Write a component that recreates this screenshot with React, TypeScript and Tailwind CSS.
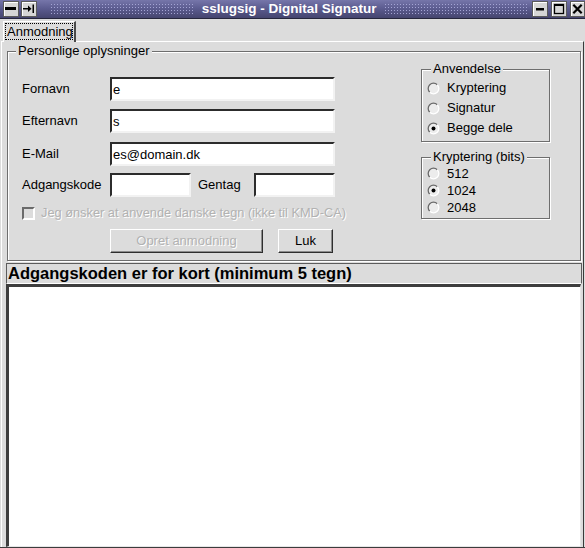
import React from "react";

// Raised / sunken bevels shared by the Motif-ish widgets below.
const sunken =
  "border-2 border-t-[#2c2c2c] border-l-[#2c2c2c] border-b-[#f2f2f2] border-r-[#f2f2f2]";
const raised =
  "border border-t-white border-l-white border-b-[#2e2e2e] border-r-[#2e2e2e] shadow-[inset_-1px_-1px_0_#8c8c8c]";
const etched =
  "border border-[#6e6e6e] shadow-[inset_1px_1px_0_#fff,1px_1px_0_#fff]";
const disabledText = "text-[#b2b2b2] [text-shadow:1px_1px_0_#fff]";

function TitleButton({ children, w = "w-[16px]" }: { children: React.ReactNode; w?: string }) {
  return (
    <div
      className={`${w} h-[16px] shrink-0 bg-[#d6d6d6] border border-[#5a5a5a] shadow-[inset_1px_1px_0_#fff] flex items-center justify-center`}
    >
      <svg width="14" height="14" viewBox="0 0 14 14">
        {children}
      </svg>
    </div>
  );
}

function Dots() {
  return (
    <div className="flex-1 h-[12px] bg-[radial-gradient(circle,#a4a4d4_0.7px,transparent_1px)] bg-[length:3px_3px]" />
  );
}

function TitleBar() {
  return (
    <div className="h-[19px] shrink-0 flex items-center bg-gradient-to-b from-[#7676aa] via-[#5a5a8e] to-[#45456f] border-b border-[#26263c]">
      <div className="ml-[3px] flex gap-[2px]">
        <TitleButton>
          <rect x="1" y="5" width="11" height="3" fill="#000" />
        </TitleButton>
        <TitleButton>
          <rect x="1" y="6" width="6" height="1.5" fill="#000" />
          <path d="M6 3.5 L9.5 6.75 L6 10 Z" fill="#000" />
          <rect x="10.5" y="2.5" width="1.5" height="8.5" fill="#000" />
        </TitleButton>
      </div>
      <div className="flex-1 flex items-center ml-[13px] mr-[4px]">
        <Dots />
        <span className="px-[8px] text-white font-bold text-[13.5px] leading-none">
          sslugsig - Dignital Signatur
        </span>
        <Dots />
      </div>
      <div className="flex gap-[3px]">
        <TitleButton>
          <rect x="3" y="6" width="8" height="2.5" fill="#000" />
        </TitleButton>
        <TitleButton>
          <rect x="2.5" y="2.5" width="9" height="9" fill="none" stroke="#000" strokeWidth="1.3" />
          <rect x="2" y="2" width="10" height="2" fill="#000" />
        </TitleButton>
        <TitleButton w="w-[15px]">
          <path d="M2.5 2.5 L11.5 11.5 M11.5 2.5 L2.5 11.5" stroke="#000" strokeWidth="2.4" />
        </TitleButton>
      </div>
    </div>
  );
}

function Radio({ on }: { on?: boolean }) {
  return (
    <svg width="13" height="13" viewBox="0 0 13 13" className="shrink-0">
      <circle cx="6.5" cy="6.5" r="5.3" fill="#ececec" />
      <path d="M2.75 10.25 A5.3 5.3 0 0 1 10.25 2.75" fill="none" stroke="#6a6a6a" strokeWidth="1.3" />
      <path d="M10.25 2.75 A5.3 5.3 0 0 1 2.75 10.25" fill="none" stroke="#ffffff" strokeWidth="1.3" />
      {on && <circle cx="6.5" cy="6.5" r="2" fill="#000" />}
    </svg>
  );
}

function RadioRow({ label, on, h }: { label: string; on?: boolean; h: string }) {
  return (
    <div className={`${h} flex items-center gap-[7px] pl-[5px]`}>
      <Radio on={on} />
      <span>{label}</span>
    </div>
  );
}

function Group({
  title,
  className,
  children,
  titleLeft = "left-[8px]",
}: {
  title: string;
  className: string;
  children: React.ReactNode;
  titleLeft?: string;
}) {
  return (
    <div className={`relative ${etched} ${className}`}>
      <span className={`absolute -top-[9px] ${titleLeft} px-[2px] bg-[#dcdcdc] leading-[15px]`}>
        {title}
      </span>
      {children}
    </div>
  );
}

function Field({ value, w }: { value?: string; w: string }) {
  return (
    <div className={`${w} h-[24px] bg-white ${sunken} flex items-center pl-[1px] leading-none`}>
      {value}
    </div>
  );
}

export default function App() {
  return (
    <div className="w-[585px] h-[548px] bg-[#dcdcdc] flex flex-col overflow-hidden font-['Liberation_Sans',Arial,sans-serif] text-[13px] text-black border-b border-[#3c3c3c]">
      <TitleBar />

      {/* tab strip */}
      <div className="h-[22px] shrink-0 flex items-end pl-[3px] relative z-10">
        <div className="w-[73px] h-[21px] -mb-[1px] bg-[#dcdcdc] border-t border-l border-white border-r-2 border-r-[#4a4a4a] p-[1px]">
          <div className="h-[17px] border border-dotted border-black flex items-center pl-[1px] leading-none">
            Anmodning
          </div>
        </div>
      </div>

      {/* tab page */}
      <div className="flex-1 flex flex-col mx-[1px] border-t border-l border-white border-r border-r-[#3a3a3a]">
        <Group title="Personlige oplysninger" className="ml-[5px] mt-[9px] w-[574px] h-[210px] shrink-0">
          <div className="flex">
            <div className="w-[413px] pl-[14px] pt-[25px]">
              <div className="flex items-center">
                <span className="w-[88px]">Fornavn</span>
                <Field value="e" w="w-[225px]" />
              </div>
              <div className="flex items-center mt-[8px]">
                <span className="w-[88px]">Efternavn</span>
                <Field value="s" w="w-[225px]" />
              </div>
              <div className="flex items-center mt-[9px]">
                <span className="w-[88px]">E-Mail</span>
                <Field value="es@domain.dk" w="w-[225px]" />
              </div>
              <div className="flex items-center mt-[7px]">
                <span className="w-[88px]">Adgangskode</span>
                <Field w="w-[81px]" />
                <span className="ml-[7px] w-[56px]">Gentag</span>
                <Field w="w-[81px]" />
              </div>
              <div className="flex items-center h-[14px] mt-[9px]">
                <div className="w-[13px] h-[13px] border-2 border-t-[#6a6a6a] border-l-[#6a6a6a] border-b-white border-r-white bg-[#dcdcdc]" />
                <span className={`ml-[6px] text-[12.8px] ${disabledText}`}>
                  Jeg ønsker at anvende danske tegn (ikke til KMD-CA)
                </span>
              </div>
              <div className="flex mt-[9px]">
                <div className={`ml-[88px] w-[153px] h-[24px] ${raised} flex items-center justify-center ${disabledText}`}>
                  Opret anmodning
                </div>
                <div className={`ml-[15px] w-[55px] h-[24px] ${raised} flex items-center justify-center`}>
                  Luk
                </div>
              </div>
            </div>

            <div className="w-[129px] pt-[17px]">
              <Group title="Anvendelse" titleLeft="left-[9px]" className="h-[73px] pt-[8px]">
                <RadioRow h="h-[20px]" label="Kryptering" />
                <RadioRow h="h-[20px]" label="Signatur" />
                <RadioRow h="h-[20px]" label="Begge dele" on />
              </Group>
              <Group title="Kryptering (bits)" titleLeft="left-[9px]" className="mt-[15px] h-[62px] pt-[7px]">
                <RadioRow h="h-[17px]" label="512" />
                <RadioRow h="h-[17px]" label="1024" on />
                <RadioRow h="h-[17px]" label="2048" />
              </Group>
            </div>
          </div>
        </Group>

        {/* status line */}
        <div className="ml-[4px] mt-[2px] w-[576px] h-[21px] shrink-0 border border-[#5c5c5c] border-b-white flex items-center pl-[1px]">
          <span className="font-bold text-[16.5px] leading-none">
            Adgangskoden er for kort (minimum 5 tegn)
          </span>
        </div>

        {/* output area */}
        <div className="ml-[4px] w-[575px] flex-1 bg-white border-t-[3px] border-l-[3px] border-t-[#3e3e3e] border-l-[#3e3e3e] border-b border-r border-b-[#e6e6e6] border-r-[#e6e6e6]" />
      </div>
    </div>
  );
}
